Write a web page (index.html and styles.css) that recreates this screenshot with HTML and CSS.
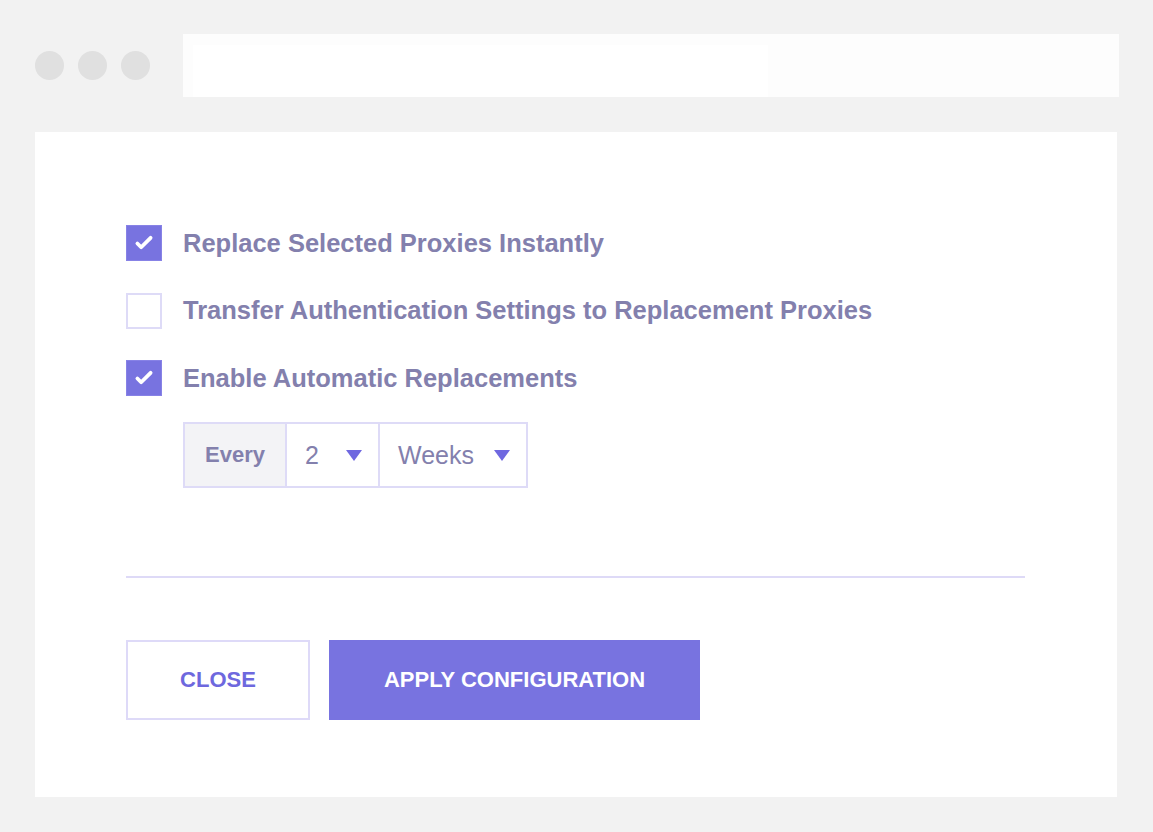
FILE: index.html
```html
<!DOCTYPE html>
<html>
<head>
<meta charset="utf-8">
<link rel="stylesheet" href="styles.css">
</head>
<body>
<div class="window">
  <div class="topbar">
    <div class="dots"><span class="dot"></span><span class="dot"></span><span class="dot"></span></div>
    <div class="address"><div class="address-inner"></div></div>
  </div>
  <div class="card">
    <div class="options">
      <label class="option">
        <span class="box checked"><svg viewBox="0 0 36 36" width="36" height="36"><path d="M11 18.5l4 4 10-10" fill="none" stroke="#fff" stroke-width="4" stroke-linecap="round" stroke-linejoin="round"/></svg></span>
        <span class="label">Replace Selected Proxies Instantly</span>
      </label>
      <label class="option">
        <span class="box"></span>
        <span class="label">Transfer Authentication Settings to Replacement Proxies</span>
      </label>
      <label class="option">
        <span class="box checked"><svg viewBox="0 0 36 36" width="36" height="36"><path d="M11 18.5l4 4 10-10" fill="none" stroke="#fff" stroke-width="4" stroke-linecap="round" stroke-linejoin="round"/></svg></span>
        <span class="label">Enable Automatic Replacements</span>
      </label>
    </div>
    <div class="interval">
      <div class="cell every">Every</div>
      <div class="cell select num"><span>2</span><span class="caret"></span></div>
      <div class="cell select unit"><span>Weeks</span><span class="caret"></span></div>
    </div>
    <hr class="divider">
    <div class="actions">
      <button class="btn btn-close">CLOSE</button>
      <button class="btn btn-apply">APPLY CONFIGURATION</button>
    </div>
  </div>
</div>
</body>
</html>
```

FILE: styles.css
```css
* { box-sizing: border-box; }
html, body { margin: 0; padding: 0; }
body {
  background: #f2f2f2;
  font-family: "Liberation Sans", Arial, sans-serif;
  width: 1153px;
  height: 832px;
  overflow: hidden;
}
.window {
  padding: 34px 0 0 35px;
}
.topbar {
  display: flex;
  align-items: center;
  height: 63px;
}
.dots {
  display: flex;
  gap: 14px;
  width: 148px;
}
.dot {
  width: 29px;
  height: 29px;
  border-radius: 50%;
  background: #e0e0e0;
}
.address {
  width: 936px;
  height: 63px;
  background: #fdfdfd;
  padding: 11px 0 0 10px;
}
.address-inner {
  width: 575px;
  height: 52px;
  background: #ffffff;
}
.card {
  margin-top: 35px;
  width: 1082px;
  height: 665px;
  background: #fff;
  padding: 93px 0 0 91px;
}
.options {
  display: flex;
  flex-direction: column;
  gap: 31.5px;
}
.option {
  display: flex;
  align-items: center;
  gap: 21px;
  height: 36px;
}
.box {
  width: 36px;
  height: 36px;
  border: 2px solid #dedbf7;
  background: #fff;
  display: flex;
  align-items: center;
  justify-content: center;
}
.box.checked {
  background: #7873e0;
  border: 1px solid #8782e6;
}
.label {
  font-size: 25.5px;
  font-weight: bold;
  color: #8380ad;
}
.interval {
  margin: 26px 0 0 57px;
  display: flex;
  width: 345px;
  height: 66px;
  border: 2px solid #dedbf7;
}
.cell {
  display: flex;
  align-items: center;
  color: #8380ad;
  font-size: 25px;
}
.every {
  width: 102px;
  background: #f3f3f6;
  justify-content: center;
  font-weight: bold;
  font-size: 22px;
  border-right: 2px solid #dedbf7;
}
.select {
  justify-content: space-between;
  padding: 0 16px 0 18px;
}
.num {
  width: 93px;
  border-right: 2px solid #dedbf7;
}
.unit {
  flex: 1;
}
.caret {
  width: 0;
  height: 0;
  border-left: 8px solid transparent;
  border-right: 8px solid transparent;
  border-top: 11px solid #6f68e0;
}
.divider {
  margin: 88px 0 0 0;
  width: 899px;
  border: none;
  height: 2px;
  background: #dedaf7;
}
.actions {
  margin-top: 62px;
  display: flex;
  gap: 19px;
}
.btn {
  height: 80px;
  font-family: "Liberation Sans", Arial, sans-serif;
  font-weight: bold;
  font-size: 22px;
  border: none;
  padding: 0;
}
.btn-close {
  width: 184px;
  background: #fff;
  border: 2px solid #dedaf8;
  color: #6e68de;
}
.btn-apply {
  width: 371px;
  background: #7873e0;
  color: #fff;
}
```
